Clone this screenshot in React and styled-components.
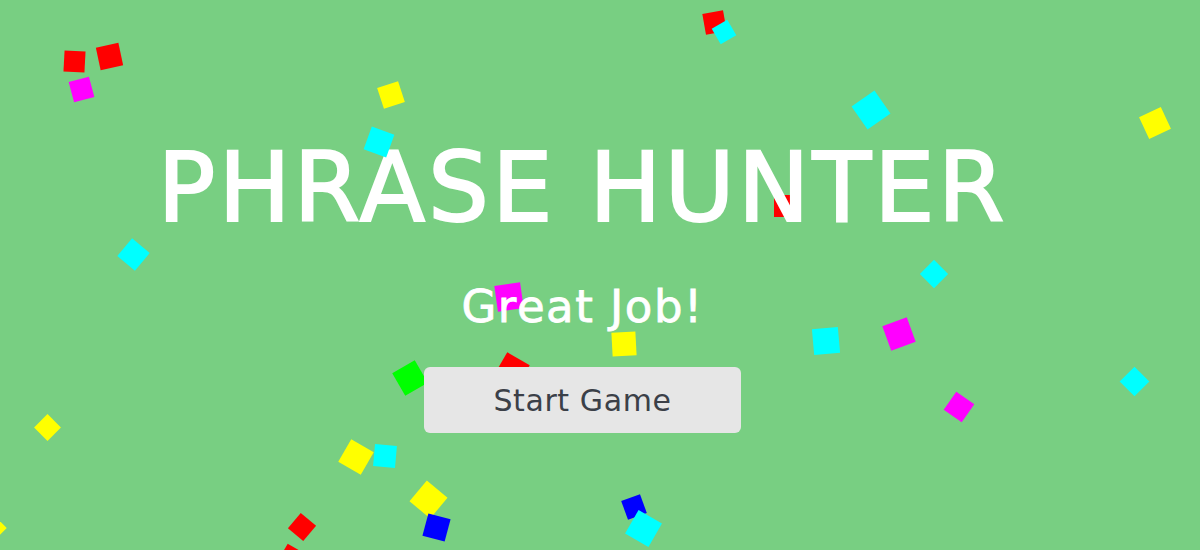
import React from "react";
import styled, { createGlobalStyle } from "styled-components";

const GlobalStyle = createGlobalStyle`
  html, body {
    margin: 0;
    padding: 0;
    background: #78cf82;
  }
  * { box-sizing: border-box; }
`;

const Page = styled.div`
  position: relative;
  width: 100%;
  height: 550px;
  overflow: hidden;
  background: #78cf82;
  font-family: "DejaVu Sans", "Open Sans", sans-serif;
`;

const Main = styled.main`
  position: relative;
  z-index: 1;
  display: flex;
  flex-direction: column;
  align-items: center;
  padding: 133px 35px 0 0;
`;

const Title = styled.h1`
  margin: 0;
  color: #fff;
  font-weight: 400;
  font-size: 96px;
  line-height: 110px;
  letter-spacing: 3px;
  -webkit-text-stroke: 2px #fff;
`;

const Message = styled.h2`
  margin: 37px 0 0;
  color: #fff;
  font-weight: 400;
  font-size: 45px;
  line-height: 54px;
  letter-spacing: 1.5px;
  -webkit-text-stroke: 0.8px #fff;
`;

const StartButton = styled.button`
  margin-top: 33px;
  width: 317px;
  height: 66px;
  border: none;
  border-radius: 6px;
  background: #e6e6e6;
  color: #3b4048;
  font-family: inherit;
  font-size: 30px;
  letter-spacing: 0.6px;
  cursor: pointer;
`;

const Piece = styled.span`
  position: absolute;
  display: block;
  width: ${(p) => p.size}px;
  height: ${(p) => p.size}px;
  background: ${(p) => p.color};
  z-index: ${(p) => (p.front ? 2 : 0)};
`;

const RED = "#ff0000";
const CYAN = "#00ffff";
const YELLOW = "#ffff00";
const MAGENTA = "#ff00ff";
const GREEN = "#00ff00";
const BLUE = "#0000ff";

// x, y = centre
const confetti = [
  [74, 61, 21, 3, RED],
  [109, 56, 23, -12, RED],
  [81, 89, 21, -15, MAGENTA],
  [391, 95, 22, -18, YELLOW],
  [379, 142, 24, 20, CYAN, true],
  [133, 254, 23, 40, CYAN],
  [714, 22, 21, -10, RED],
  [724, 32, 18, -30, CYAN],
  [871, 110, 28, -35, CYAN],
  [1155, 123, 24, -25, YELLOW],
  [785, 206, 22, 0, RED],
  [934, 274, 20, 45, CYAN],
  [509, 297, 26, -8, MAGENTA],
  [624, 344, 24, -3, YELLOW],
  [512, 370, 26, 30, RED],
  [410, 378, 26, -30, GREEN],
  [826, 341, 26, -5, CYAN],
  [899, 334, 26, -20, MAGENTA],
  [959, 407, 22, 35, MAGENTA],
  [1134, 381, 21, 45, CYAN],
  [47, 427, 19, 45, YELLOW],
  [-6, 528, 18, 45, YELLOW],
  [356, 457, 26, 30, YELLOW],
  [385, 456, 22, 5, CYAN],
  [428, 499, 27, 40, YELLOW],
  [436, 527, 23, 15, BLUE],
  [302, 527, 20, 40, RED],
  [291, 556, 18, 30, RED],
  [634, 507, 20, -20, BLUE],
  [643, 528, 27, 30, CYAN],
];

export default function App() {
  return (
    <>
      <GlobalStyle />
      <Page>
        {confetti.map(([x, y, size, rot, color, front], i) => (
          <Piece
            key={i}
            size={size}
            color={color}
            front={front ? 1 : 0}
            style={{
              left: x - size / 2,
              top: y - size / 2,
              transform: `rotate(${rot}deg)`,
            }}
          />
        ))}
        <Main>
          <Title>PHRASE HUNTER</Title>
          <Message>Great Job!</Message>
          <StartButton>Start Game</StartButton>
        </Main>
      </Page>
    </>
  );
}
